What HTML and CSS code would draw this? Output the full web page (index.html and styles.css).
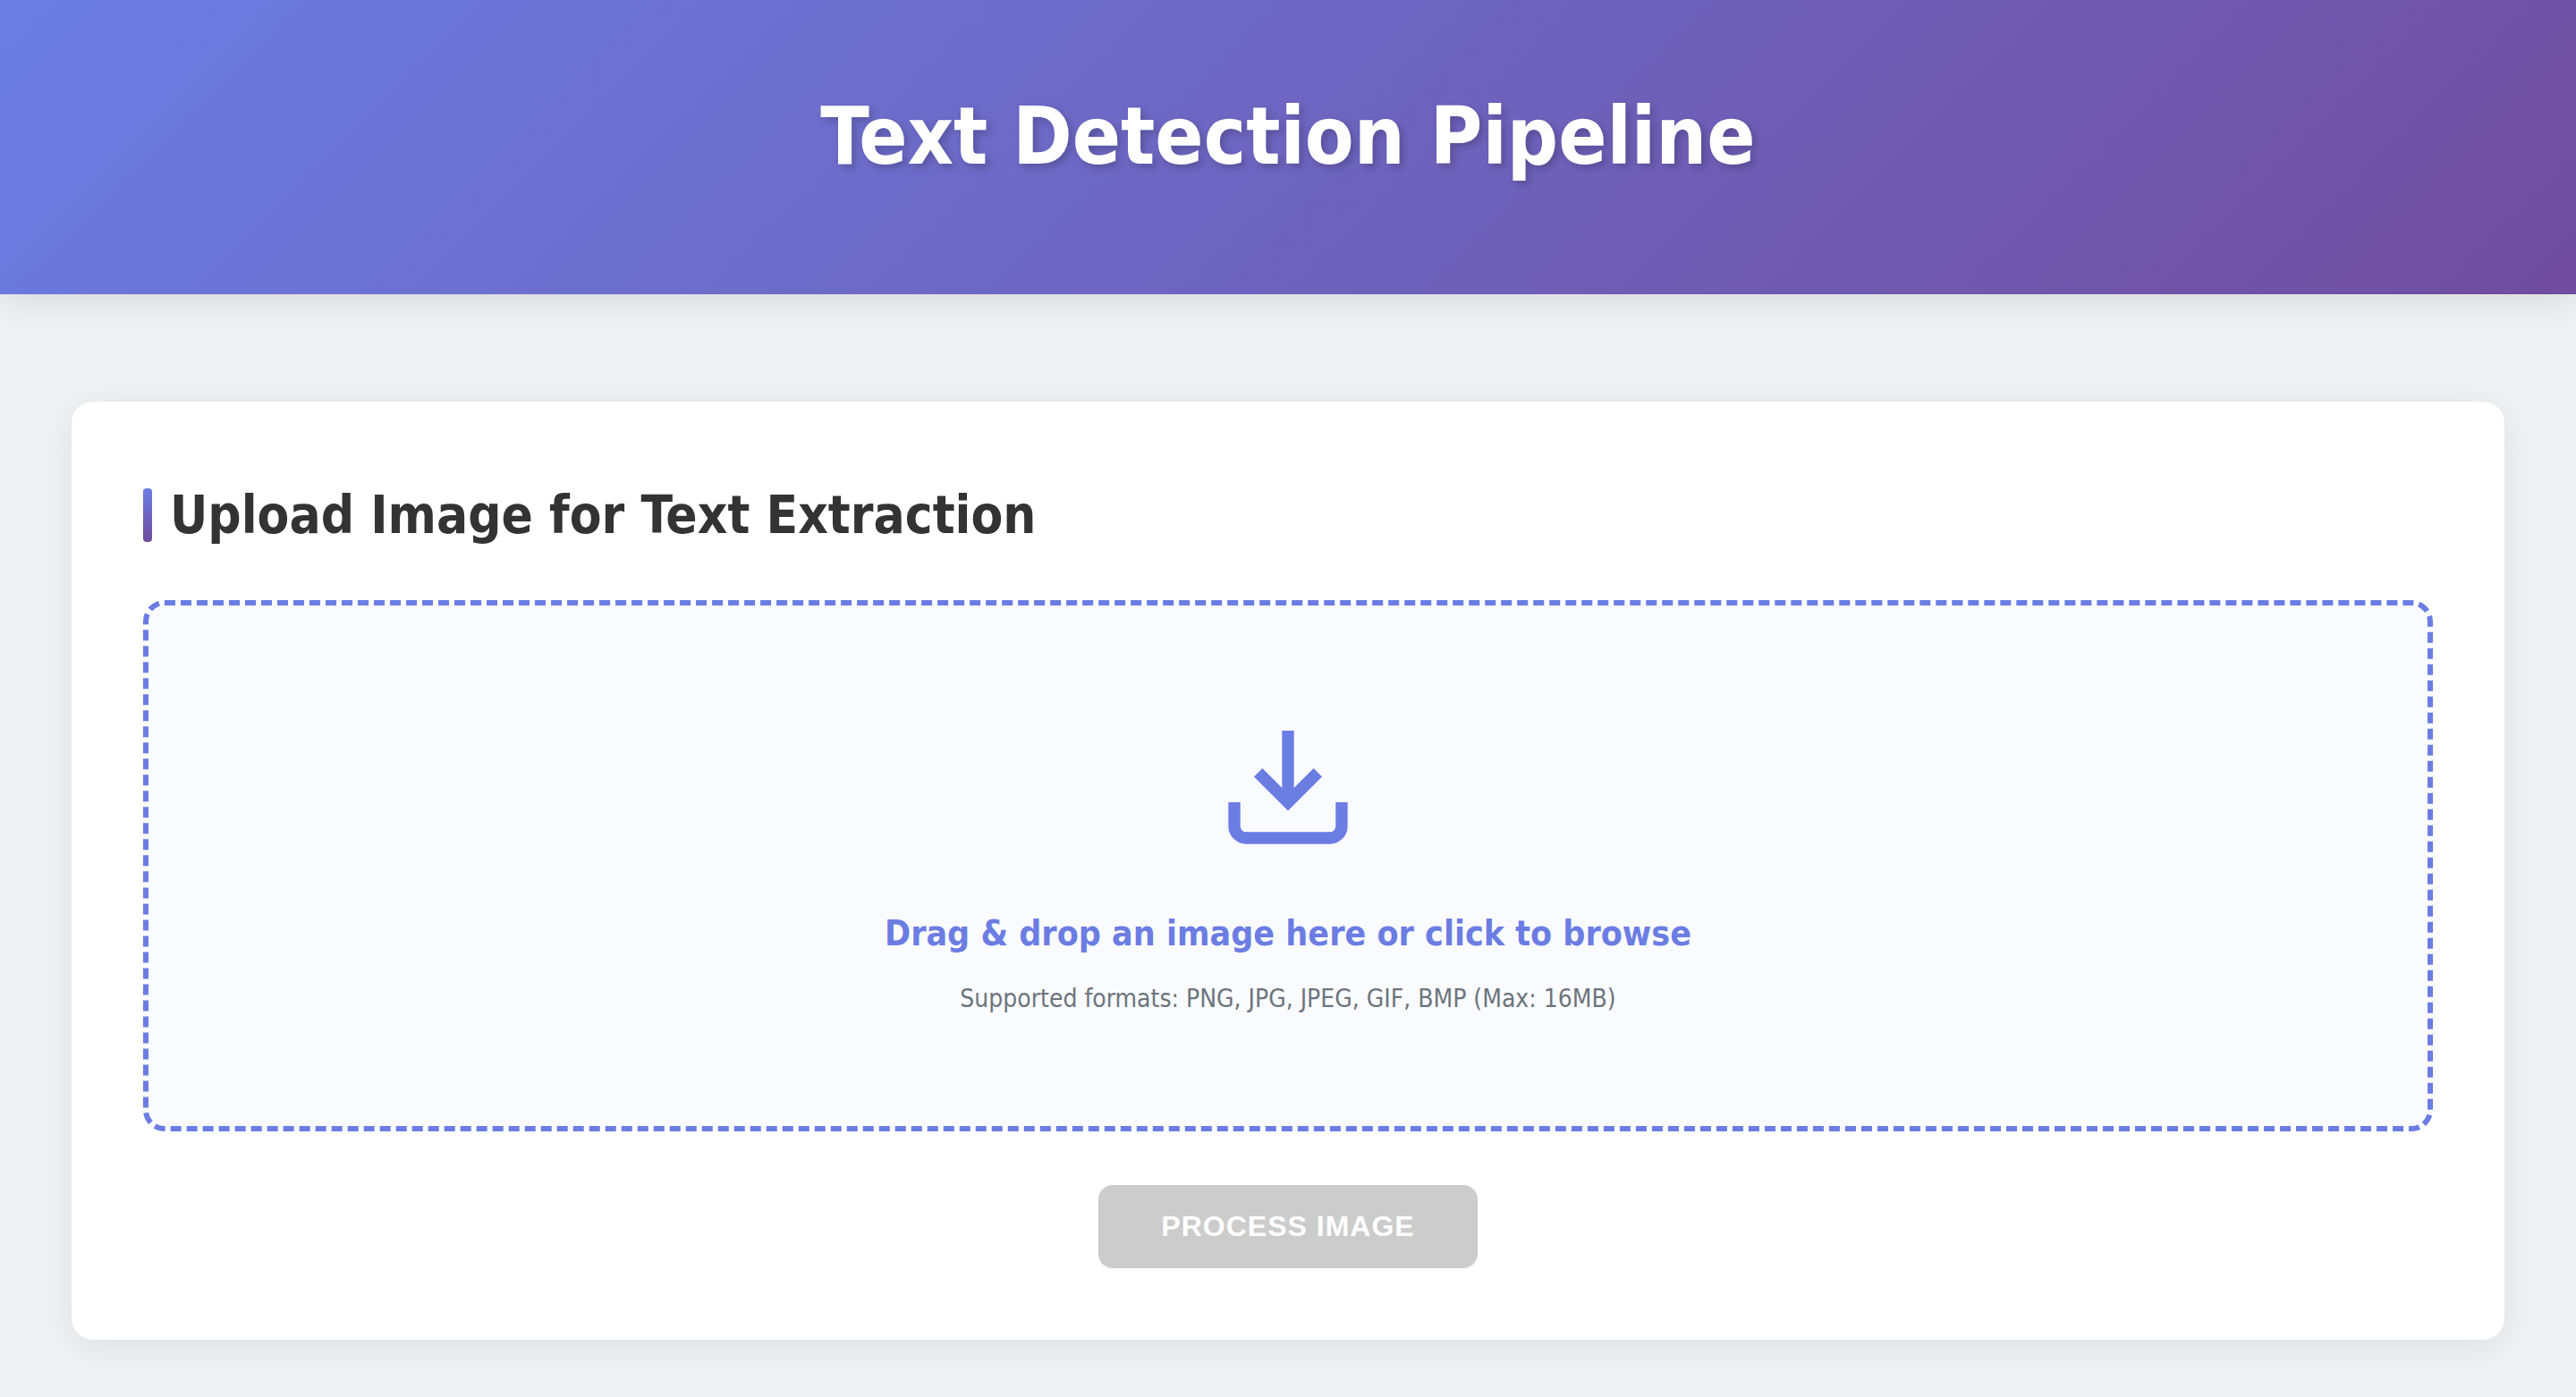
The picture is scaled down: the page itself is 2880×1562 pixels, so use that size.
FILE: index.html
```html
<!DOCTYPE html>
<html lang="en">
<head>
<meta charset="utf-8">
<meta name="viewport" content="width=device-width, initial-scale=1">
<title>Text Detection Pipeline</title>
<link rel="stylesheet" href="styles.css">
</head>
<body>
<header class="header">
  <h1 class="header-title">Text Detection Pipeline</h1>
</header>
<main class="container">
  <section class="card">
    <h2 class="card-title">Upload Image for Text Extraction</h2>
    <form class="upload-form">
      <button class="upload-area" type="button">
        <svg class="upload-icon" viewBox="0 0 24 24" fill="none" stroke="currentColor" stroke-width="2" aria-hidden="true">
          <path d="M21 15v4a2 2 0 0 1-2 2H5a2 2 0 0 1-2-2v-4"/>
          <path d="M7 10l5 5 5-5"/>
          <path d="M12 15V3"/>
        </svg>
        <span class="upload-text">Drag &amp; drop an image here or click to browse</span>
        <span class="upload-hint">Supported formats: PNG, JPG, JPEG, GIF, BMP (Max: 16MB)</span>
      </button>
      <button class="process-button" type="submit" disabled>PROCESS IMAGE</button>
    </form>
  </section>
</main>
</body>
</html>
```
FILE: styles.css
```css
* {
  box-sizing: border-box;
  margin: 0;
  padding: 0;
}

body {
  min-height: 100vh;
  background: #f0f1f5;
  color: #333;
  font-family: "DejaVu Sans Condensed", "Noto Sans", sans-serif;
}

.header {
  padding: 80px 40px 105px;
  background: linear-gradient(135deg, #6b7de3 0%, #704d9e 100%);
  box-shadow: 0 8px 40px rgba(0, 0, 0, 0.1);
  color: #fff;
  text-align: center;
}

.header-title {
  font-size: 89px;
  font-weight: 700;
  line-height: 144px;
  text-shadow: 4px 4px 8px rgba(0, 0, 0, 0.2);
}

.container {
  padding: 120px 80px 64px;
}

.card {
  padding: 80px;
  border-radius: 24px;
  background: #fff;
  box-shadow: 0 8px 40px rgba(0, 0, 0, 0.08);
}

.card-title {
  display: flex;
  align-items: center;
  gap: 20px;
  margin-bottom: 48px;
  font-size: 58px;
  line-height: 94px;
}

.card-title::before {
  width: 10px;
  height: 60px;
  border-radius: 4px;
  background: linear-gradient(180deg, #6b7de3, #704d9e);
  content: "";
}

.upload-form {
  display: flex;
  flex-direction: column;
  align-items: center;
  gap: 60px;
}

.upload-area {
  display: flex;
  flex-direction: column;
  align-items: center;
  width: 100%;
  padding: 120px;
  border: 6px dashed #6b7de3;
  border-radius: 24px;
  background: #fafbff;
  font-family: inherit;
  cursor: pointer;
}

.upload-icon {
  width: 160px;
  height: 160px;
  margin-bottom: 54px;
  color: #6b7de3;
}

.upload-text {
  margin-bottom: 18px;
  color: #6b7de3;
  font-size: 39px;
  font-weight: 700;
  line-height: 66px;
}

.upload-hint {
  color: #6c757d;
  font-size: 28px;
  line-height: 44px;
}

.process-button {
  padding: 28px 70px;
  border: 0;
  border-radius: 16px;
  background: #ccc;
  color: #fff;
  font-family: "Liberation Sans", Arial, sans-serif;
  font-size: 32px;
  font-weight: 700;
  line-height: 37px;
  letter-spacing: 1px;
}
```
